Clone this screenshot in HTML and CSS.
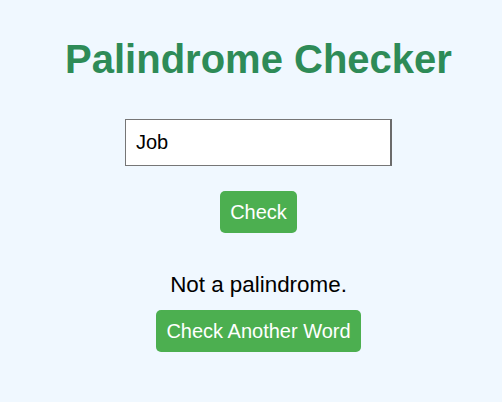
FILE: index.html
```html
<!DOCTYPE html>
<html lang="en">
<head>
<meta charset="utf-8">
<title>Palindrome Checker</title>
<link rel="stylesheet" href="styles.css">
</head>
<body>
<main class="app">
  <h1 class="title">Palindrome Checker</h1>
  <input class="word-input" type="text" value="Job">
  <button class="btn btn-check" type="button">Check</button>
  <p class="result">Not a palindrome.</p>
  <button class="btn btn-again" type="button">Check Another Word</button>
</main>
</body>
</html>
```

FILE: styles.css
```css
html, body {
  margin: 0;
  padding: 0;
  background: #f0f8ff;
}

body {
  font-family: "Liberation Sans", Arial, sans-serif;
  padding-left: 15px;
}

.app {
  display: flex;
  flex-direction: column;
  align-items: center;
  padding-top: 36px;
}

.title {
  margin: 0;
  font-size: 40px;
  line-height: 46px;
  font-weight: bold;
  color: #2e8b57;
}

.word-input {
  margin-top: 37px;
  box-sizing: border-box;
  width: 267px;
  height: 47px;
  padding: 0 10px;
  font-family: "Liberation Sans", Arial, sans-serif;
  font-size: 20px;
  color: #000;
  background: #fff;
  border: 1px solid #767676;
  border-right: 2px solid #6b6b6b;
  border-radius: 0;
  outline: none;
}

.btn {
  box-sizing: border-box;
  height: 42px;
  padding: 0 10px;
  font-family: "Liberation Sans", Arial, sans-serif;
  font-size: 20px;
  color: #fff;
  background: #4caf50;
  border: none;
  border-radius: 5px;
  cursor: pointer;
}

.btn-check {
  margin-top: 25px;
}

.result {
  margin: 39px 0 0;
  font-size: 22.4px;
  line-height: 26px;
  color: #000;
}

.btn-again {
  margin-top: 12px;
}
```
